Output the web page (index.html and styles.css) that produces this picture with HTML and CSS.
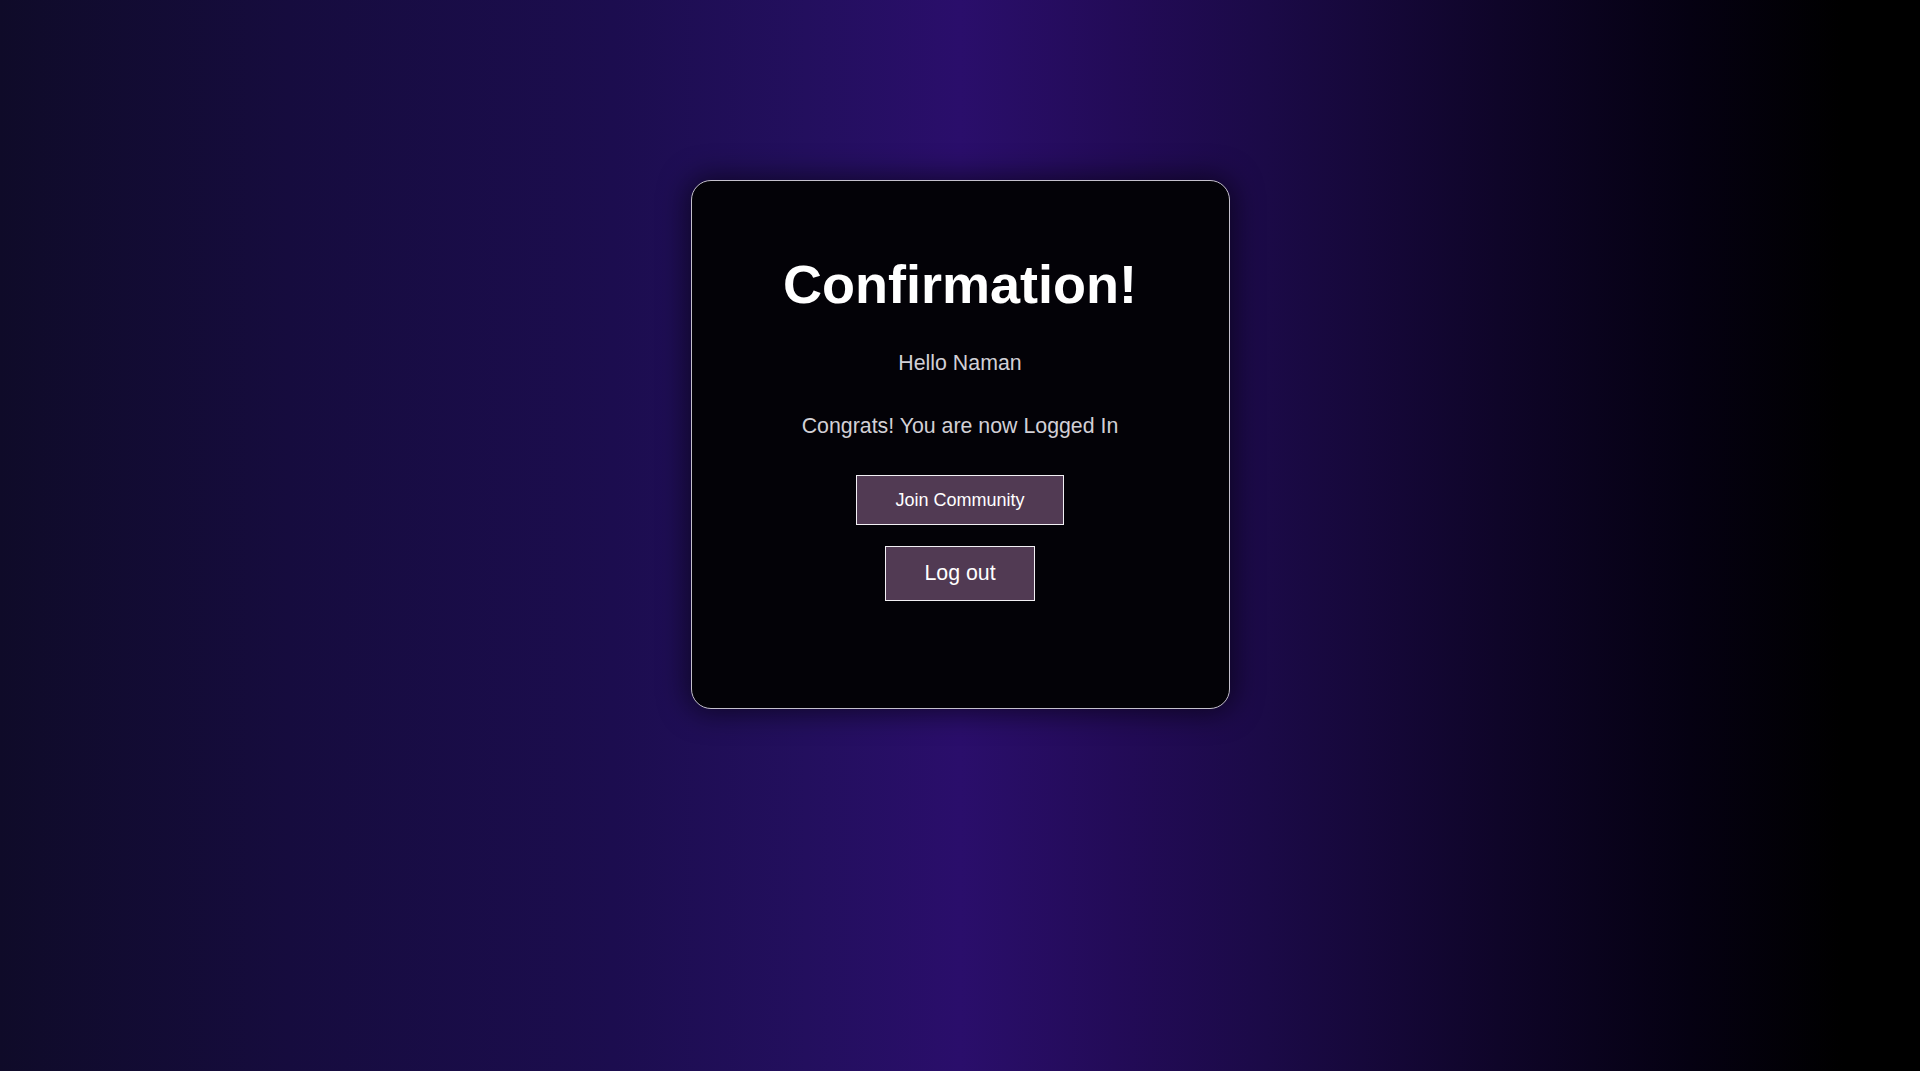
FILE: index.html
```html
<!DOCTYPE html>
<html lang="en">
<head>
<meta charset="UTF-8">
<title>Confirmation</title>
<link rel="stylesheet" href="styles.css">
</head>
<body>
<main class="page">
  <section class="card">
    <h1 class="title">Confirmation!</h1>
    <p class="hello">Hello Naman</p>
    <p class="msg">Congrats! You are now Logged In</p>
    <button class="btn btn-join" type="button">Join Community</button>
    <button class="btn btn-logout" type="button">Log out</button>
  </section>
</main>
</body>
</html>
```

FILE: styles.css
```css
html, body {
  margin: 0;
  padding: 0;
  height: 100%;
}

body {
  font-family: "Liberation Sans", Arial, sans-serif;
  background: linear-gradient(90deg,
    #0f0b29 0%,
    #160c3e 15%,
    #1c0d4f 32%,
    #230f5e 42%,
    #2a0e6b 50%,
    #230b58 58%,
    #1b0a47 66%,
    #0f0529 78%,
    #050112 88%,
    #000000 96%,
    #000000 100%);
  min-height: 100vh;
}

.page {
  display: flex;
  flex-direction: column;
  align-items: center;
  padding-top: 180px;
}

.card {
  box-sizing: border-box;
  width: 539px;
  height: 529px;
  background: #030207;
  border: 1px solid #c4c0cc;
  border-radius: 20px;
  box-shadow: 0 0 28px 4px rgba(0, 0, 0, 0.55);
  display: flex;
  flex-direction: column;
  align-items: center;
  text-align: center;
  padding-top: 72px;
}

.title {
  margin: 0;
  font-size: 54px;
  line-height: 62px;
  font-weight: bold;
  color: #ffffff;
}

.hello,
.msg {
  margin: 0;
  font-size: 21.33px;
  line-height: 25px;
  color: #d2d0d6;
}

.hello {
  margin-top: 36px;
}

.msg {
  margin-top: 38px;
}

.btn {
  font-family: "Liberation Sans", Arial, sans-serif;
  background: #513a53;
  color: #ffffff;
  border: 1px solid #f2f0f4;
  border-radius: 0;
  padding: 14px 38.5px;
  margin: 0;
  cursor: pointer;
}

.btn-join {
  margin-top: 36px;
  font-size: 18px;
  line-height: 20px;
}

.btn-logout {
  margin-top: 21px;
  font-size: 21.33px;
  line-height: 25px;
}
```
